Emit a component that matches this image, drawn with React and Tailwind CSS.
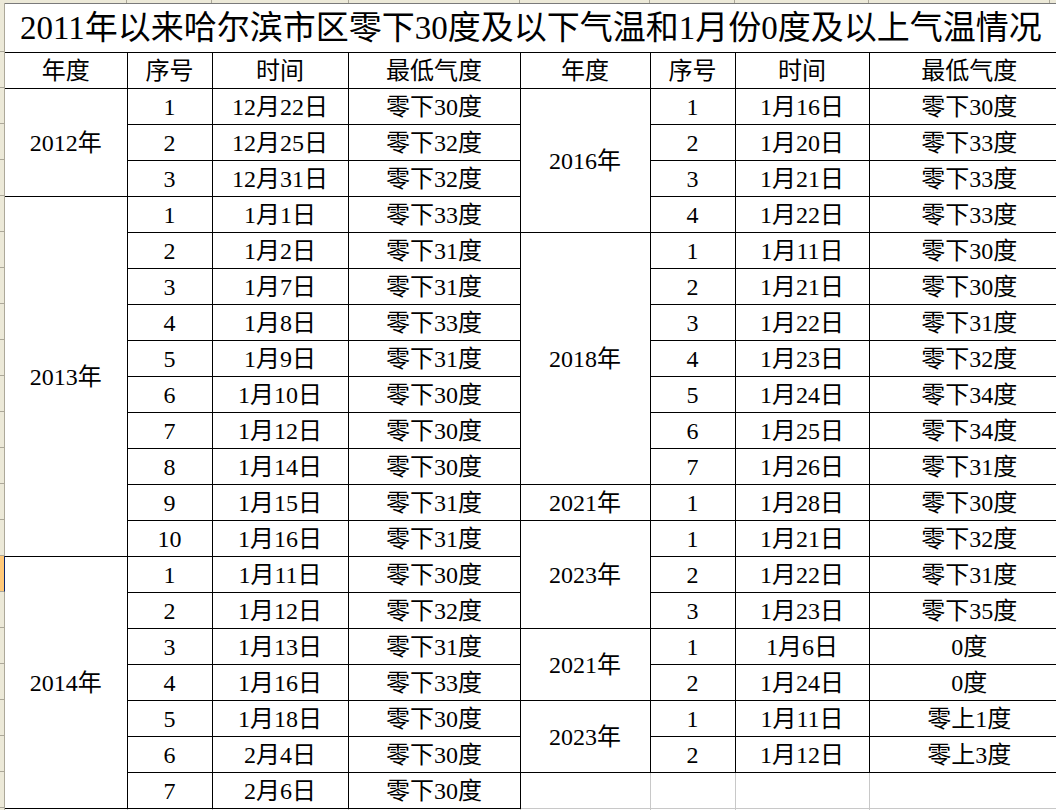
import React from 'react';

const font = { fontFamily: '"Liberation Serif", "Noto Sans CJK SC", serif' };

const leftGroups = [
  { year: '2012年', rows: [['1', '12月22日', '零下30度'], ['2', '12月25日', '零下32度'], ['3', '12月31日', '零下32度']] },
  {
    year: '2013年',
    rows: [
      ['1', '1月1日', '零下33度'], ['2', '1月2日', '零下31度'], ['3', '1月7日', '零下31度'],
      ['4', '1月8日', '零下33度'], ['5', '1月9日', '零下31度'], ['6', '1月10日', '零下30度'],
      ['7', '1月12日', '零下30度'], ['8', '1月14日', '零下30度'], ['9', '1月15日', '零下31度'],
      ['10', '1月16日', '零下31度'],
    ],
  },
  {
    year: '2014年',
    rows: [
      ['1', '1月11日', '零下30度'], ['2', '1月12日', '零下32度'], ['3', '1月13日', '零下31度'],
      ['4', '1月16日', '零下33度'], ['5', '1月18日', '零下30度'], ['6', '2月4日', '零下30度'],
      ['7', '2月6日', '零下30度'],
    ],
  },
];

const rightGroups = [
  { year: '2016年', rows: [['1', '1月16日', '零下30度'], ['2', '1月20日', '零下33度'], ['3', '1月21日', '零下33度'], ['4', '1月22日', '零下33度']] },
  {
    year: '2018年',
    rows: [
      ['1', '1月11日', '零下30度'], ['2', '1月21日', '零下30度'], ['3', '1月22日', '零下31度'],
      ['4', '1月23日', '零下32度'], ['5', '1月24日', '零下34度'], ['6', '1月25日', '零下34度'],
      ['7', '1月26日', '零下31度'],
    ],
  },
  { year: '2021年', rows: [['1', '1月28日', '零下30度']] },
  { year: '2023年', rows: [['1', '1月21日', '零下32度'], ['2', '1月22日', '零下31度'], ['3', '1月23日', '零下35度']] },
  { year: '2021年', rows: [['1', '1月6日', '0度'], ['2', '1月24日', '0度']] },
  { year: '2023年', rows: [['1', '1月11日', '零上1度'], ['2', '1月12日', '零上3度']] },
];

// one entry per sheet row, year only on the first row of its merged block
const flatten = (groups) => {
  const out = [];
  groups.forEach((g) => {
    g.rows.forEach((r, i) => {
      out.push({ year: i === 0 ? g.year : null, span: g.rows.length, cells: r });
    });
  });
  return out;
};

const leftRows = flatten(leftGroups);
const rightRows = flatten(rightGroups);

const cell = 'h-[36px] p-0 border border-black text-center align-middle text-[24px] leading-none whitespace-nowrap';
const blank = 'h-[36px] p-0 border border-[#c8c8c8]';

export default function App() {
  return (
    <div className="w-[1056px] h-[810px] overflow-hidden bg-white text-black" style={font}>
      <div className="h-[3px] flex bg-[#ece9d8]">
        <div className="w-[127px] border-r border-[#aca899]" />
        <div className="w-[85px] border-r border-[#aca899]" />
        <div className="w-[137px] border-r border-[#aca899]" />
        <div className="w-[171px] border-r border-[#aca899]" />
        <div className="w-[130px] border-r border-[#aca899]" />
        <div className="w-[85px] border-r border-[#aca899]" />
        <div className="w-[134px] border-r border-[#aca899]" />
        <div className="w-[181px] border-r border-[#aca899]" />
      </div>
      <div className="flex">
        <div className="w-[5px] shrink-0 bg-[#ece9d8] flex flex-col">
          <div className="h-[49px] border-b border-r border-[#aca899]" />
          <div className="h-[36px] border-b border-r border-[#aca899]" />
          {leftRows.map((_, i) => (
            <div
              key={i}
              className={
                i === 13
                  ? 'h-[36px] bg-[#ffc97a] border-b border-[#aca899] border-r border-r-[#0a246a]'
                  : 'h-[36px] border-b border-r border-[#aca899]'
              }
            />
          ))}
          <div className="h-[36px] border-r border-[#aca899]" />
        </div>
        <table className="table-fixed border-collapse w-[1064px] shrink-0">
          <colgroup>
            <col className="w-[122px]" />
            <col className="w-[85px]" />
            <col className="w-[136px]" />
            <col className="w-[172px]" />
            <col className="w-[130px]" />
            <col className="w-[85px]" />
            <col className="w-[134px]" />
            <col className="w-[200px]" />
          </colgroup>
          <tbody>
            <tr>
              <td colSpan={8} className="h-[49px] p-0 pl-[15px] border-b border-black border-t border-t-[#7a7a7a] text-left align-middle text-[33px] leading-none whitespace-nowrap">
                2011年以来哈尔滨市区零下30度及以下气温和1月份0度及以上气温情况
              </td>
            </tr>
            <tr>
              {['年度', '序号', '时间', '最低气度', '年度', '序号', '时间', '最低气度'].map((h, i) => (
                <td key={i} className={`${cell} ${i === 0 ? 'border-l-0' : ''} ${i === 7 ? 'border-r-0' : ''}`}>{h}</td>
              ))}
            </tr>
            {leftRows.map((l, i) => {
              const r = rightRows[i];
              return (
                <tr key={i}>
                  {l.year ? <td rowSpan={l.span} className={`${cell} border-l-0`}>{l.year}</td> : null}
                  {l.cells.map((c, j) => (
                    <td key={j} className={cell}>{c}</td>
                  ))}
                  {r ? (
                    <>
                      {r.year ? <td rowSpan={r.span} className={cell}>{r.year}</td> : null}
                      {r.cells.map((c, j) => (
                        <td key={j} className={`${cell} ${j === 2 ? 'border-r-0' : ''}`}>{c}</td>
                      ))}
                    </>
                  ) : (
                    <>
                      <td className={`${blank} border-t-black border-l-black`} />
                      <td className={`${blank} border-t-black`} />
                      <td className={`${blank} border-t-black`} />
                      <td className={`${blank} border-t-black border-r-0`} />
                    </>
                  )}
                </tr>
              );
            })}
            <tr>
              <td className="h-[36px] p-0 border-t border-black" />
              <td className="h-[36px] p-0 border-t border-black border-l border-l-[#c8c8c8]" />
              <td className="h-[36px] p-0 border-t border-black border-l border-l-[#c8c8c8]" />
              <td className="h-[36px] p-0 border-t border-black border-l border-l-[#c8c8c8]" />
              <td className="h-[36px] p-0 border-t border-[#c8c8c8] border-l border-l-[#c8c8c8]" />
              <td className="h-[36px] p-0 border-t border-[#c8c8c8] border-l border-l-[#c8c8c8]" />
              <td className="h-[36px] p-0 border-t border-[#c8c8c8] border-l border-l-[#c8c8c8]" />
              <td className="h-[36px] p-0 border-t border-[#c8c8c8] border-l border-l-[#c8c8c8]" />
            </tr>
          </tbody>
        </table>
      </div>
    </div>
  );
}
